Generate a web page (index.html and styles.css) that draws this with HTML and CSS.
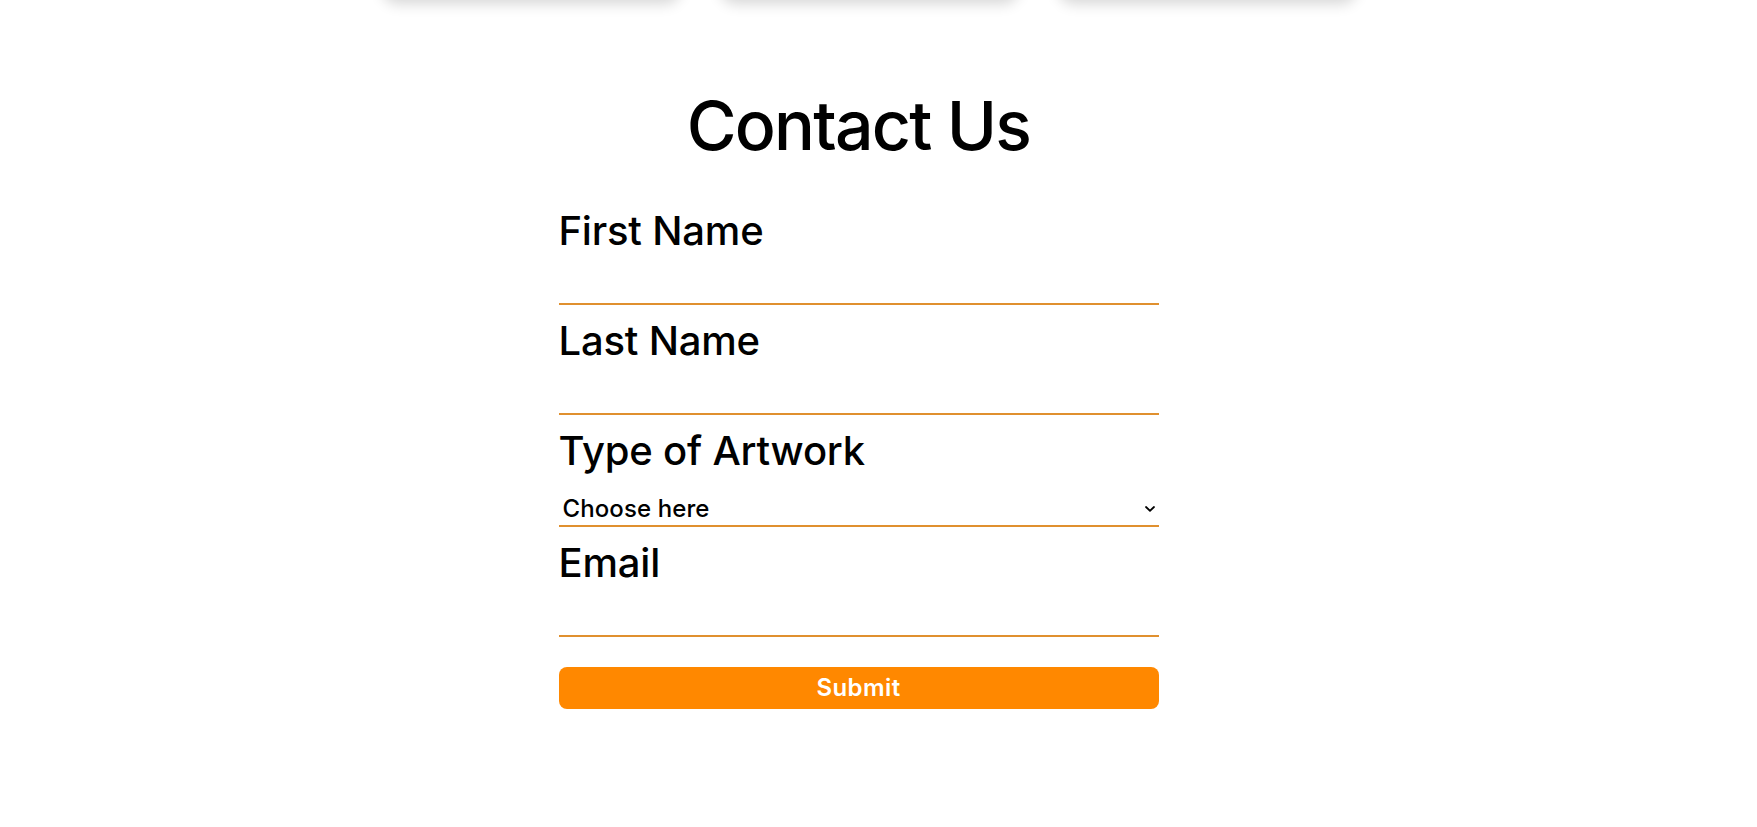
FILE: index.html
```html
<!DOCTYPE html>
<html lang="en">
<head>
<meta charset="utf-8">
<title>Contact Us</title>
<link rel="stylesheet" href="styles.css">
</head>
<body>
  <div class="cards">
    <div class="card"></div>
    <div class="card"></div>
    <div class="card"></div>
  </div>
  <section class="contact">
    <h1 class="title">Contact Us</h1>
    <form class="form">
      <div class="group">
        <label class="label" for="first">First Name</label>
        <input class="field" id="first" type="text">
      </div>
      <div class="group">
        <label class="label" for="last">Last Name</label>
        <input class="field" id="last" type="text">
      </div>
      <div class="group">
        <label class="label" for="type">Type of Artwork</label>
        <div class="select-wrap">
          <select class="select" id="type">
            <option>Choose here</option>
            <option>Painting</option>
            <option>Sculpture</option>
            <option>Photography</option>
          </select>
          <svg class="chevron" width="10" height="6" viewBox="0 0 10 6"><polyline points="1,1 5,4.8 9,1" fill="none" stroke="#000" stroke-width="1.8" stroke-linecap="round" stroke-linejoin="round"/></svg>
        </div>
      </div>
      <div class="group">
        <label class="label" for="email">Email</label>
        <input class="field" id="email" type="email">
      </div>
      <button class="submit" type="button">Submit</button>
    </form>
  </section>
</body>
</html>
```

FILE: styles.css
```css
* {
  box-sizing: border-box;
}

html, body {
  margin: 0;
  padding: 0;
  background: #ffffff;
}

body {
  font-family: Inter, "Noto Sans", "Liberation Sans", sans-serif;
  color: #000000;
  overflow: hidden;
}

.cards {
  display: flex;
  justify-content: center;
  gap: 39px;
  padding-right: 18px;
  margin-top: -200px;
  height: 200px;
}

.card {
  width: 299px;
  height: 200px;
  background: #ffffff;
  border-radius: 16px;
  box-shadow: 0 4px 14px rgba(0, 0, 0, 0.16);
}

.contact {
  display: flex;
  flex-direction: column;
  align-items: center;
  padding-top: 85px;
  padding-right: 40px;
}

.title {
  margin: 0 0 40px 0;
  font-size: 68px;
  line-height: 81.6px;
  font-weight: 500;
  letter-spacing: -1.8px;
}

.form {
  width: 600px;
  display: flex;
  flex-direction: column;
}

.group {
  display: flex;
  flex-direction: column;
  margin-bottom: 12px;
}

.label {
  font-size: 40px;
  line-height: 48px;
  font-weight: 500;
  letter-spacing: -0.2px;
}

.field {
  height: 50px;
  border: none;
  border-bottom: 2px solid #e0902f;
  background: transparent;
  outline: none;
  font-family: inherit;
  font-size: 24px;
  padding: 0 4px;
}

.select-wrap {
  position: relative;
}

.select {
  width: 100%;
  height: 52px;
  -webkit-appearance: none;
  appearance: none;
  border: none;
  border-bottom: 2px solid #e0902f;
  border-radius: 0;
  background: transparent;
  outline: none;
  font-family: inherit;
  font-size: 24px;
  font-weight: 500;
  letter-spacing: 0.1px;
  color: #000;
  padding: 18px 20px 0 4px;
}

.chevron {
  position: absolute;
  right: 4px;
  top: 31px;
  pointer-events: none;
}

.submit {
  margin-top: 18px;
  height: 42px;
  border: none;
  border-radius: 8px;
  background: #ff8800;
  color: #ffffff;
  font-family: inherit;
  font-size: 24px;
  font-weight: 600;
  letter-spacing: 0.4px;
  cursor: pointer;
}
```
